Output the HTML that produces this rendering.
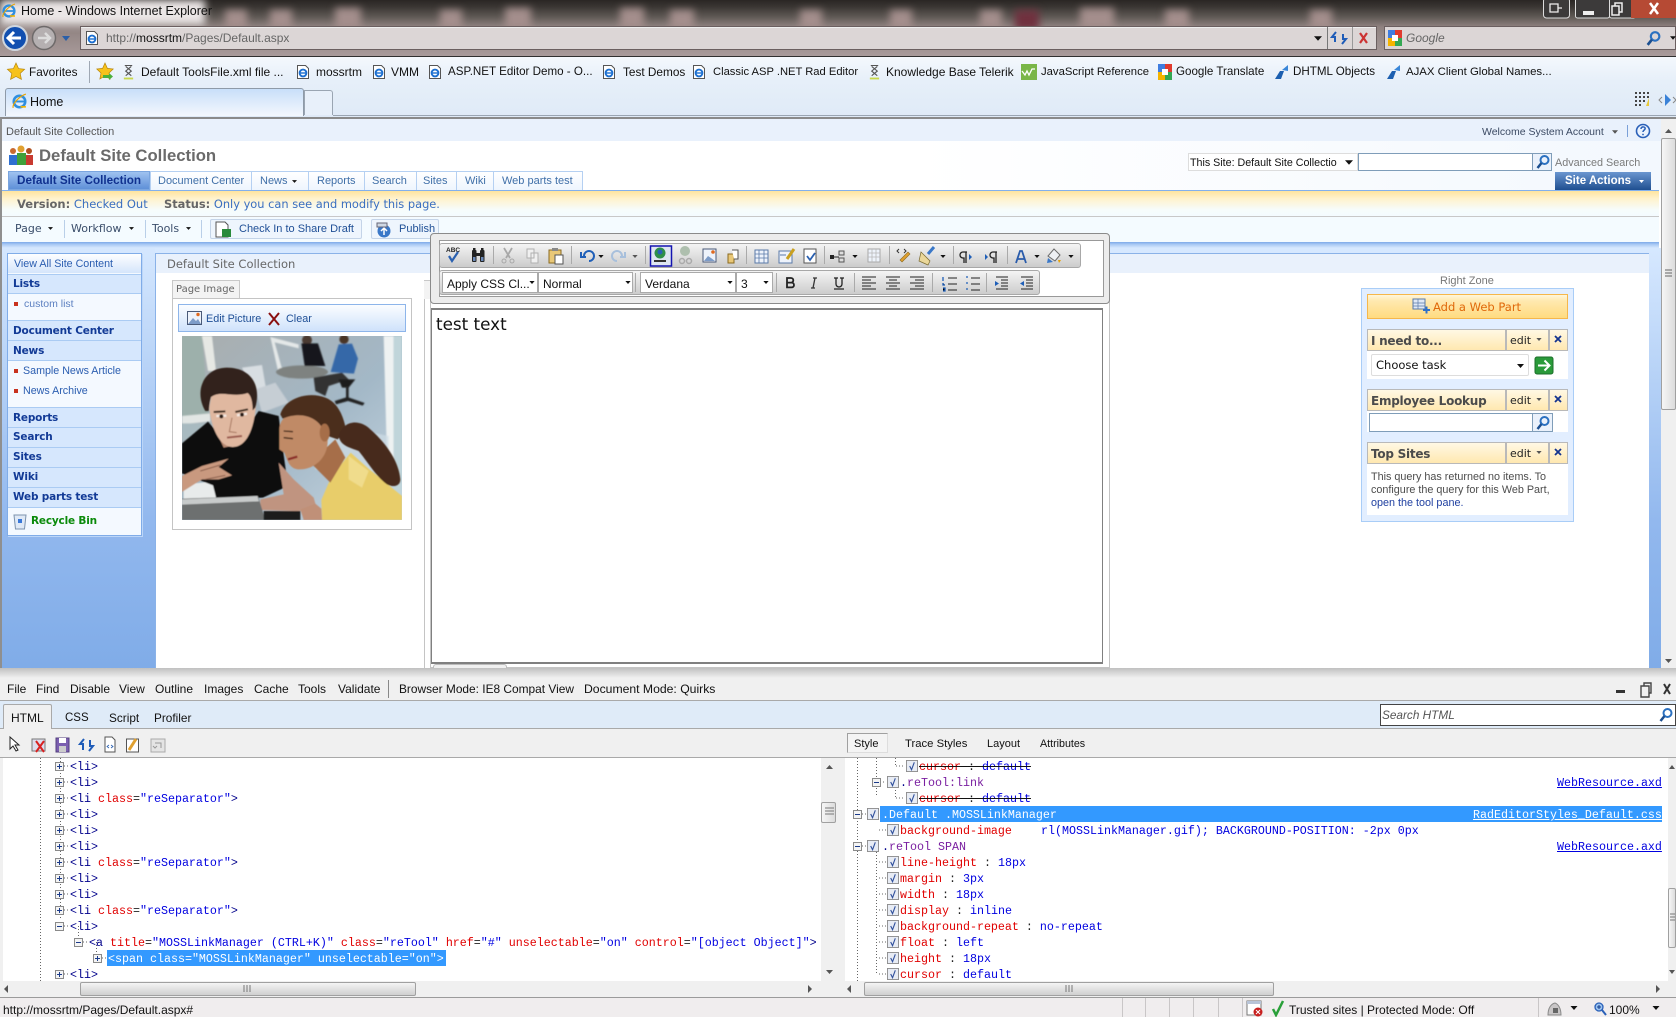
<!DOCTYPE html>
<html><head><meta charset="utf-8"><title>Home</title>
<style>
html,body{margin:0;padding:0;width:1676px;height:1017px;overflow:hidden;background:#f0f0f0}
body{position:relative;font:12px "Liberation Sans",sans-serif;color:#222}
.b{position:absolute;box-sizing:border-box}
.t{position:absolute;white-space:nowrap;line-height:16px;height:16px}
.v{font-family:"DejaVu Sans",sans-serif}
.m{font-family:"Liberation Mono",monospace;font-size:11.67px;color:#00008b;margin-top:1px}
.r{color:#e00000}.u{color:#0000e0}.k{color:#222}
.s{text-decoration:line-through;text-decoration-color:#111}
.n{font:bold 10.5px "DejaVu Sans",sans-serif;letter-spacing:-.18px;color:#123a96}
.l{font-size:10.7px;color:#2a5db0}
.a{font-size:11px;color:#3f6fa8}
.f{font-size:12px;color:#111}
.d{font-size:12px;color:#111}
.h{font:bold 12px "DejaVu Sans",sans-serif;letter-spacing:-.25px;color:#4b4b4b}
.lk{color:#0000e0;text-decoration:underline}
svg{position:absolute;left:0;top:0}
</style></head><body>

<svg width="0" height="0" style="position:absolute">
<defs>
<symbol id="ie" viewBox="0 0 16 16"><circle cx="8" cy="8" r="5.400" fill="none" stroke="#2f8fe0" stroke-width="2.400"/><path d="M3 8h10" stroke="#2f8fe0" stroke-width="1.800"/><path d="M9 13l5 0" stroke="#f4b400" stroke-width="1.600"/><path d="M2 14C1 10 8 3 14 1" fill="none" stroke="#e9a400" stroke-width="1.100"/></symbol>
<symbol id="pg" viewBox="0 0 16 16"><path d="M2.500 1.500h8l3 3v10h-11z" fill="#fff" stroke="#555"/><circle cx="8" cy="9" r="3.400" fill="none" stroke="#1c6fd0" stroke-width="1.900"/><path d="M5 9h6" stroke="#1c6fd0" stroke-width="1.400"/></symbol>
<symbol id="pl" viewBox="0 0 9 9"><rect x=".5" y=".5" width="8" height="8" fill="#f4f4f4" stroke="#8a8a8a"/><path d="M2 4.500h5M4.500 2v5" stroke="#1a3a8a"/></symbol>
<symbol id="mn" viewBox="0 0 9 9"><rect x=".5" y=".5" width="8" height="8" fill="#f4f4f4" stroke="#8a8a8a"/><path d="M2 4.500h5" stroke="#1a3a8a"/></symbol>
<symbol id="ck" viewBox="0 0 13 13"><rect x=".5" y=".5" width="12" height="12" fill="#e8ecf4" stroke="#8d8d8d"/><path d="M4 6.500l2 4L9 2.500" fill="none" stroke="#30509c" stroke-width="1.200"/></symbol>
<symbol id="g" viewBox="0 0 16 18"><rect x="1" y="1" width="7" height="8" fill="#3f7de0"/><rect x="8" y="1" width="7" height="8" fill="#e03a2e"/><rect x="1" y="9" width="7" height="8" fill="#f5b400"/><rect x="8" y="9" width="7" height="8" fill="#34a853"/><rect x="5" y="6" width="6" height="6" fill="#fff"/></symbol>
<symbol id="x" viewBox="0 0 14 18"><path d="M3 2h8M3 16h8M4 3l6 5-6 5M10 3l-6 5 6 5" fill="none" stroke="#555" stroke-width="1.200"/><rect x="2" y="15" width="10" height="2" fill="#c8d84a"/></symbol>
<symbol id="ms" viewBox="0 0 16 16"><path d="M1 15L6 7h4l-3 8z" fill="#1c5fb0"/><path d="M8 6l6-5v6z" fill="#3a86d8"/></symbol>
<symbol id="mg" viewBox="0 0 16 16"><circle cx="9.500" cy="6" r="4" fill="none" stroke="#2a70c0" stroke-width="2"/><path d="M6.500 9L2.500 14" stroke="#1c4f90" stroke-width="2.500"/></symbol>
<symbol id="dd" viewBox="0 0 7 4"><path d="M0 0h7L3.500 4z" fill="#111"/></symbol>
<symbol id="ddg" viewBox="0 0 7 4"><path d="M0 0h7L3.500 4z" fill="#555"/></symbol>
</defs>
</svg>

<!-- glass chrome -->
<div class="b" style="left:0;top:0;width:1676px;height:56px;background:linear-gradient(180deg,#2a2624 0,#3a3633 12%,#5f5955 30%,#8f8280 48%,#a89a9a 100%)"></div>
<svg width="1676" height="56" style="filter:blur(4px)">
<g fill="#a48e8c"><rect x="225" y="10" width="22" height="20"/><rect x="270" y="10" width="22" height="20"/><rect x="335" y="8" width="26" height="22"/><rect x="440" y="10" width="22" height="20"/><rect x="505" y="8" width="26" height="22"/><rect x="620" y="8" width="24" height="22"/><rect x="670" y="10" width="24" height="20"/><rect x="800" y="10" width="22" height="20"/><rect x="1080" y="8" width="34" height="22"/><rect x="1165" y="10" width="24" height="20"/><rect x="1310" y="10" width="22" height="20"/><rect x="890" y="10" width="22" height="20"/><rect x="980" y="10" width="22" height="20"/></g>
<rect x="1015" y="10" width="24" height="20" fill="#70303e"/>
<rect x="0" y="0" width="205" height="25" fill="#ebe6e6"/>
</svg>
<div class="t" style="left:21px;top:3px;font-size:12.500px;color:#111">Home - Windows Internet Explorer</div>
<svg width="40" height="60"><use href="#ie" x="1" y="3" width="16" height="16"/>
<circle cx="15" cy="38" r="12" fill="#114fb0" stroke="#cfd6de" stroke-width="2"/><path d="M21 38H10M14 32l-6 6 6 6" fill="none" stroke="#fff" stroke-width="3"/></svg>
<svg width="80" height="60"><circle cx="44" cy="38" r="11.500" fill="#b5b0b1" stroke="#6e6a6a" stroke-width="1.500"/><path d="M38 38h11M45 33l5 5-5 5" fill="none" stroke="#dcdcdc" stroke-width="2.500"/><path d="M62 36h8l-4 5z" fill="#2a5fa8"/></svg>
<!-- address -->
<div class="b" style="left:80px;top:26px;width:1297px;height:24px;background:#dcd6d6;border:1px solid #6b5f60;box-shadow:0 1px 0 #eee inset"></div>
<div class="b" style="left:1327px;top:27px;width:1px;height:22px;background:#777"></div>
<div class="b" style="left:1352px;top:27px;width:1px;height:22px;background:#999"></div>
<div class="t" style="left:106px;top:30px;color:#666;font-size:12px">http://<span style="color:#111">mossrtm</span>/Pages/Default.aspx</div>
<div class="b" style="left:1384px;top:26px;width:292px;height:24px;background:#dcd6d6;border:1px solid #6b5f60"></div>
<div class="t" style="left:1406px;top:30px;color:#666;font-size:12px;font-style:italic">Google</div>
<svg width="1676" height="60">
<use href="#pg" x="84" y="30" width="16" height="16"/>
<use href="#dd" x="1314" y="36" width="8" height="5"/>
<path d="M1336 32l-4 5h3v5M1342 44l4-5h-3v-5" fill="none" stroke="#1f5cb8" stroke-width="2"/>
<path d="M1360 33l7 10M1367 33l-7 10" stroke="#cc3333" stroke-width="2.200"/>
<use href="#g" x="1387" y="29" width="16" height="18"/>
<use href="#mg" x="1645" y="30" width="17" height="17"/>
<use href="#dd" x="1670" y="36" width="6" height="4"/>
<!-- window buttons -->
<g fill="#3c3a3a" stroke="#ddd"><rect x="1543.500" y="-2" width="26" height="20" rx="3"/><rect x="1575.500" y="-2" width="34" height="20" rx="2"/><rect x="1609.500" y="-2" width="26" height="20" rx="2"/></g>
<rect x="1631" y="-2" width="47" height="20" fill="#b64a34"/>
<path d="M1550 4h8v8h-8zM1558 8h4" fill="none" stroke="#eee" stroke-width="1.300"/>
<rect x="1583" y="11" width="11" height="4" fill="#eee"/>
<path d="M1612 6h7v9h-7zM1615 6V3h7v9h-3" fill="none" stroke="#eee" stroke-width="1.500"/>
<path d="M1650 3l8 11M1658 3l-8 11" stroke="#fff" stroke-width="2.500"/>
</svg>

<!-- favorites bar -->
<div class="b" style="left:0;top:56px;width:1676px;height:62px;background:linear-gradient(180deg,#f4f8fd 0,#e6eff9 40%,#dfeaf7 100%);border-top:1px solid #2f2f2f"></div>
<div class="b" style="left:89px;top:61px;width:1px;height:22px;background:#9fa8b4"></div>
<div class="t f" style="left:29px;top:64px;font-size:11.800px">Favorites</div>
<div class="t f" style="left:141px;top:64px">Default ToolsFile.xml file ...</div>
<div class="t f" style="left:316px;top:64px;font-size:12px">mossrtm</div>
<div class="t f" style="left:391px;top:64px">VMM</div>
<div class="t f" style="left:448px;top:64px;font-size:11.600px">ASP.NET Editor Demo - O...</div>
<div class="t f" style="left:623px;top:64px;font-size:11.800px">Test Demos</div>
<div class="t f" style="left:713px;top:64px;font-size:11.200px">Classic ASP .NET Rad Editor</div>
<div class="t f" style="left:886px;top:64px">Knowledge Base</div>
<div class="t f" style="left:979px;top:64px">Telerik</div>
<div class="t f" style="left:1041px;top:64px;font-size:11.300px">JavaScript Reference</div>
<div class="t f" style="left:1176px;top:64px;font-size:11.600px">Google Translate</div>
<div class="t f" style="left:1293px;top:64px;font-size:11.600px">DHTML Objects</div>
<div class="t f" style="left:1406px;top:64px;font-size:11.400px">AJAX Client Global Names...</div>
<svg width="1676" height="118">
<path d="M16 63l2.600 5.600 6 .7-4.400 4.100 1.200 6L16 76.500 10.600 79.400l1.200-6L7.400 69.300l6-.7z" fill="#f6c21c" stroke="#b8860b" stroke-width=".7"/>
<path d="M105 63l2.400 5.400 5.800.6-4.200 4 1.100 5.900L105 76l-5.100 2.900 1.100-5.900-4.200-4 5.800-.6z" fill="#f6c21c" stroke="#b8860b" stroke-width=".7"/><path d="M103 75h6v-2l4 3.500-4 3.500v-2h-6z" fill="#4bb03a"/>
<use href="#x" x="122" y="63" width="13" height="18"/>
<use href="#pg" x="295" y="64" width="16" height="16"/><use href="#pg" x="371" y="64" width="16" height="16"/><use href="#pg" x="427" y="64" width="16" height="16"/><use href="#pg" x="601" y="64" width="16" height="16"/><use href="#pg" x="691" y="64" width="16" height="16"/>
<use href="#x" x="868" y="63" width="13" height="18"/>
<rect x="1021" y="64" width="16" height="16" fill="#7ab648"/><path d="M1022 71l3 4 2-4 2 4 3-6h3" fill="none" stroke="#fff" stroke-width="1.300"/>
<use href="#g" x="1157" y="63" width="16" height="18"/>
<use href="#ms" x="1274" y="64" width="16" height="16"/><use href="#ms" x="1386" y="64" width="16" height="16"/>
</svg>
<!-- tabs -->
<div class="b" style="left:5px;top:88px;width:299px;height:28px;background:linear-gradient(180deg,#c8dffa 0,#dceafb 45%,#f3f7fd 100%);border:1px solid #8e9aa8;border-bottom:0;border-radius:3px 3px 0 0"></div>
<div class="b" style="left:304px;top:90px;width:29px;height:25px;background:#e8f0fa;border:1px solid #9aa5b2;border-bottom:0;border-radius:0 3px 0 0"></div>
<div class="b" style="left:333px;top:115px;width:1343px;height:1px;background:#9aa5b2"></div>
<div class="t" style="left:30px;top:94px;font-size:12.500px;color:#111">Home</div>
<svg width="1676" height="118"><use href="#ie" x="11" y="93" width="17" height="17"/>
<g fill="#444"><rect x="1635" y="92" width="2" height="2"/><rect x="1639" y="92" width="2" height="2"/><rect x="1643" y="92" width="2" height="2"/><rect x="1647" y="92" width="2" height="2"/><rect x="1635" y="96" width="2" height="2"/><rect x="1639" y="96" width="2" height="2"/><rect x="1643" y="96" width="2" height="2"/><rect x="1647" y="96" width="2" height="2"/><rect x="1635" y="100" width="2" height="2"/><rect x="1639" y="100" width="2" height="2"/><rect x="1643" y="100" width="2" height="2"/><rect x="1635" y="104" width="2" height="2"/><rect x="1639" y="104" width="2" height="2"/></g>
<path d="M1649 98l-3 8h3z" fill="#e8c93a"/>
<path d="M1665 94v12l6-6z" fill="#3a82d8"/><path d="M1662 97l-3 3 3 3M1673 97l3 3-3 3" fill="none" stroke="#888"/>
</svg>

<!-- page -->
<div class="b" style="left:0;top:117px;width:1676px;height:551px;background:#fff;border-top:2px solid #8a8a8a;border-left:2px solid #8f8f8f"></div>
<div class="b" style="left:2px;top:119px;width:1659px;height:22px;background:#e9f1fc"></div>
<div class="b" style="left:2px;top:141px;width:1659px;height:49px;background:linear-gradient(90deg,#fff 55%,#f3f8fe 100%)"></div>
<div class="t" style="left:6px;top:124px;font-size:11px;color:#555">Default Site Collection</div>
<div class="t" style="left:1482px;top:124px;font-size:10.500px;color:#3b4a63">Welcome System Account</div>
<div class="b" style="left:1627px;top:125px;width:1px;height:12px;background:#7aa0d8"></div>
<div class="t" style="left:39px;top:148px;font:bold 16.700px/16px 'Liberation Sans',sans-serif;color:#6a6a6a">Default Site Collection</div>
<!-- search -->
<div class="b" style="left:1188px;top:153px;width:170px;height:18px;background:#fff;border:1px solid #ddd"></div>
<div class="t" style="left:1190px;top:155px;font-size:10.700px;color:#111">This Site: Default Site Collectio</div>
<div class="b" style="left:1358px;top:153px;width:175px;height:18px;background:#fff;border:1px solid #7f9db9"></div>
<div class="b" style="left:1532px;top:153px;width:20px;height:18px;background:#eaf1fb;border:1px solid #7f9db9"></div>
<div class="t" style="left:1555px;top:155px;font-size:10.800px;color:#7a7a7a">Advanced Search</div>
<!-- top nav -->
<div class="b" style="left:150px;top:171px;width:433px;height:19px;background:linear-gradient(180deg,#fff,#eef5fe);border:1px solid #b5d0f2;border-bottom:0"></div>
<div class="b" style="left:8px;top:171px;width:142px;height:19px;background:linear-gradient(180deg,#9fc2f0,#5f90d8 100%);border:1px solid #7aa5df"></div>
<div class="b" style="left:251px;top:171px;width:1px;height:19px;background:#b5d0f2"></div>
<div class="b" style="left:308px;top:171px;width:1px;height:19px;background:#b5d0f2"></div>
<div class="b" style="left:364px;top:171px;width:1px;height:19px;background:#b5d0f2"></div>
<div class="b" style="left:416px;top:171px;width:1px;height:19px;background:#b5d0f2"></div>
<div class="b" style="left:456px;top:171px;width:1px;height:19px;background:#b5d0f2"></div>
<div class="b" style="left:493px;top:171px;width:1px;height:19px;background:#b5d0f2"></div>
<div class="t" style="left:17px;top:173px;font:bold 11.700px/16px 'Liberation Sans',sans-serif;color:#10318f">Default Site Collection</div>
<div class="t a" style="left:158px;top:173px">Document Center</div>
<div class="t a" style="left:260px;top:173px">News</div>
<div class="t a" style="left:317px;top:173px">Reports</div>
<div class="t a" style="left:372px;top:173px">Search</div>
<div class="t a" style="left:423px;top:173px">Sites</div>
<div class="t a" style="left:465px;top:173px">Wiki</div>
<div class="t a" style="left:502px;top:173px">Web parts test</div>
<div class="b" style="left:1555px;top:172px;width:96px;height:18px;background:linear-gradient(180deg,#6a96d0,#1f4f90)"></div>
<div class="t" style="left:1565px;top:173px;font:bold 11.500px/16px 'Liberation Sans',sans-serif;color:#fff">Site Actions</div>
<!-- yellow band -->
<div class="b" style="left:2px;top:190px;width:1657px;height:26px;background:linear-gradient(180deg,#ffe49e 0,#fff2cc 30%,#f6fcfb 75%,#f4fbff 100%);border-top:1px solid #83b0ec"></div>
<div class="t v" style="left:17px;top:196px;font-size:11.500px;color:#3a6fc0"><b style="color:#666">Version:</b> Checked Out</div>
<div class="t v" style="left:164px;top:196px;font-size:11.400px;color:#3a6fc0"><b style="color:#666">Status:</b> Only you can see and modify this page.</div>
<div class="b" style="left:2px;top:216px;width:1657px;height:26px;background:#f4fbff;border-top:1px solid #c8c8c8"></div>
<div class="t v" style="left:15px;top:221px;font-size:11px;color:#3b4e6b">Page</div>
<div class="t v" style="left:71px;top:221px;font-size:11px;color:#3b4e6b">Workflow</div>
<div class="t v" style="left:152px;top:221px;font-size:11px;color:#3b4e6b">Tools</div>
<div class="b" style="left:64px;top:220px;width:1px;height:18px;background:#b9cfe8"></div>
<div class="b" style="left:145px;top:220px;width:1px;height:18px;background:#b9cfe8"></div>
<div class="b" style="left:201px;top:220px;width:1px;height:18px;background:#b9cfe8"></div>
<div class="b" style="left:210px;top:219px;width:152px;height:20px;background:#eef5fd;border:1px solid #c4d4e8;border-radius:2px"></div>
<div class="b" style="left:371px;top:219px;width:68px;height:20px;background:#eef5fd;border:1px solid #c4d4e8;border-radius:2px"></div>
<div class="t" style="left:239px;top:221px;font-size:11px;color:#1f4f96">Check In to Share Draft</div>
<div class="t" style="left:399px;top:221px;font-size:11px;color:#1f4f96">Publish</div>
<!-- nav column -->
<div class="b" style="left:2px;top:242px;width:153px;height:426px;background:linear-gradient(180deg,#d6e8ff 0,#bcd6f8 25%,#92b8ee 65%,#80ace8 100%)"></div>
<div class="b" style="left:2px;top:242px;width:1657px;height:6px;background:linear-gradient(180deg,#7da9e8 0,#a9c9f4 40%,#d6e8ff 100%)"></div>
<div class="b" style="left:155px;top:248px;width:1494px;height:5px;background:#d6e8ff"></div>
<div class="b" style="left:1649px;top:248px;width:12px;height:420px;background:linear-gradient(180deg,#d6e8ff 0,#bcd6f8 25%,#92b8ee 65%,#80ace8 100%)"></div>
<div class="b" style="left:155px;top:253px;width:1494px;height:415px;background:#fff;border-top:1px solid #8ab2e8;border-left:1px solid #8ab2e8"></div>
<div class="b" style="left:156px;top:254px;width:1493px;height:19px;background:#e9f1fc"></div>
<div class="t v" style="left:167px;top:256px;font-size:11.500px;color:#666">Default Site Collection</div>

<div class="b" style="left:7px;top:253px;width:135px;height:283px;background:#f4f9ff;border:1px solid #80ace8;box-shadow:1px 1px 0 #bcd6f8"></div>
<div class="b" style="left:8px;top:254px;width:133px;height:19px;background:linear-gradient(180deg,#fdfeff,#d5e5fb)"></div>
<div class="b hd" style="left:8px;top:274px;width:133px;height:20px;background:#d6e7fd;border-top:1px solid #aacbf3;border-bottom:1px solid #aacbf3"></div>
<div class="b hd" style="left:8px;top:320px;width:133px;height:21px;background:#d6e7fd;border-top:1px solid #aacbf3;border-bottom:1px solid #aacbf3"></div>
<div class="b hd" style="left:8px;top:341px;width:133px;height:20px;background:#d6e7fd;border-bottom:1px solid #aacbf3"></div>
<div class="b hd" style="left:8px;top:407px;width:133px;height:21px;background:#d6e7fd;border-top:1px solid #aacbf3;border-bottom:1px solid #aacbf3"></div>
<div class="b hd" style="left:8px;top:428px;width:133px;height:20px;background:#d6e7fd;border-bottom:1px solid #aacbf3"></div>
<div class="b hd" style="left:8px;top:448px;width:133px;height:20px;background:#d6e7fd;border-bottom:1px solid #aacbf3"></div>
<div class="b hd" style="left:8px;top:468px;width:133px;height:20px;background:#d6e7fd;border-bottom:1px solid #aacbf3"></div>
<div class="b hd" style="left:8px;top:488px;width:133px;height:20px;background:#d6e7fd;border-bottom:1px solid #aacbf3"></div>
<div class="t" style="left:14px;top:256px;font-size:10.700px;color:#2a5db0">View All Site Content</div>
<div class="t n" style="left:13px;top:278px">Lists</div>
<div class="t l" style="left:24px;top:296px;font-size:10.500px;color:#5b7fc0">custom list</div>
<div class="t n" style="left:13px;top:325px">Document Center</div>
<div class="t n" style="left:13px;top:345px">News</div>
<div class="t l" style="left:23px;top:363px">Sample News Article</div>
<div class="t l" style="left:23px;top:383px">News Archive</div>
<div class="t n" style="left:13px;top:412px">Reports</div>
<div class="t n" style="left:13px;top:431px">Search</div>
<div class="t n" style="left:13px;top:451px">Sites</div>
<div class="t n" style="left:13px;top:471px">Wiki</div>
<div class="t n" style="left:13px;top:491px">Web parts test</div>
<div class="t n" style="left:31px;top:512px;margin-top:3px;color:#0a8a0a">Recycle Bin</div>
<div class="b" style="left:14px;top:302px;width:4px;height:4px;background:#c8321e"></div>
<div class="b" style="left:14px;top:369px;width:4px;height:4px;background:#c8321e"></div>
<div class="b" style="left:14px;top:389px;width:4px;height:4px;background:#c8321e"></div>

<!-- page image -->
<div class="b" style="left:172px;top:280px;width:68px;height:19px;background:#f3f3f3;border:1px solid #c8c8c8;border-bottom:0"></div>
<div class="t v" style="left:176px;top:282px;font-size:10px;color:#666">Page Image</div>
<div class="b" style="left:172px;top:298px;width:240px;height:232px;background:#fff;border:1px solid #c4c4c4"></div>
<div class="b" style="left:178px;top:304px;width:228px;height:28px;background:linear-gradient(180deg,#fbfdff,#cfe2fb);border:1px solid #8db5ea"></div>
<div class="t" style="left:206px;top:311px;font-size:10.800px;color:#1f4f96">Edit Picture</div>
<div class="t" style="left:286px;top:311px;font-size:10.800px;color:#1f4f96">Clear</div>
<div class="b" style="left:424px;top:280px;width:1px;height:388px;background:#c4c4c4"></div>
<div class="b" style="left:424px;top:280px;width:8px;height:19px;background:#f3f3f3;border-top:1px solid #c8c8c8"></div>

<svg viewBox="0 0 660 552" style="left:182px;top:336px;width:220px;height:184px">
<defs><filter id="bl" x="-5%" y="-5%" width="110%" height="110%"><feGaussianBlur stdDeviation="2.500"/></filter><filter id="bs" x="-5%" y="-5%" width="110%" height="110%"><feGaussianBlur stdDeviation="1.800"/></filter>
<linearGradient id="bgp" x1="0" y1="0" x2="1" y2="1"><stop offset="0" stop-color="#a9adad"/><stop offset=".55" stop-color="#a3b8c7"/><stop offset="1" stop-color="#c9d8e3"/></linearGradient></defs>
<rect width="660" height="552" fill="url(#bgp)"/>
<g filter="url(#bl)">
<path d="M0 0h60l20 240H0z" fill="#9db0ab"/>
<path d="M60 0h30l12 105H78z" fill="#e6e8e4"/>
<path d="M0 240l85-8v24L0 265z" fill="#e2e6e4"/>
<path d="M0 262h90l-60 50H0z" fill="#a8bac0"/>
<path d="M605 0h30v370h-20z" fill="#eef2f2"/>
<path d="M635 0h25v552h-25z" fill="#c0d5da"/>
<path d="M265 3l85 22 0 12-72-18 25 90h-14z" fill="#e4e8e8"/>
<path d="M180 95l60-8 12 70-40 10z" fill="#d8dee2"/>
<path d="M220 160l60-20 40 60-80 30z" fill="#c6ced4"/>
<ellipse cx="360" cy="108" rx="78" ry="20" fill="#7e8280"/>
<circle cx="375" cy="12" r="15" fill="#4c3a30"/><path d="M358 22h50l22 68h-62z" fill="#17181c"/>
<circle cx="486" cy="10" r="14" fill="#4a3428"/><path d="M470 25l40-2 18 45-12 45-70-5z" fill="#3468a8"/>
<path d="M395 125l85-15 20 20-60 20-10 30-30-15z" fill="#333"/>
<path d="M470 130h50l-20 25h-20z" fill="#1a1a1a"/><path d="M492 150h8v40h-8z" fill="#222"/><path d="M458 195l38-12 52 18-6 8-44-14-36 10z" fill="#222"/>
<path d="M380 250l240 50v110l-220-10z" fill="#cfdde6" opacity=".7"/>
</g>
<g filter="url(#bs)">
<path d="M5 445l90-8 12 55-102 5z" fill="#e8ebeb"/>
<path d="M0 322l78-65 60 70 62-60 30-42 60 15 12 95 16 115-75 35-140 3-10-40L0 412z" fill="#111"/>
<path d="M290 380l45 50 60 55 10 35-60 5-110-3v-32l70-15z" fill="#c09480"/>
<path d="M0 420l60-30 80-22-30 25 40 25-40 12-50 0-60 38-0 8z" fill="#c9997f"/>
<path d="M55 405l60-18M70 430l60-12" stroke="#8a5f4c" stroke-width="3"/>
<path d="M100 280l25 55 45-10 35-50-5-40z" fill="#b98a72"/>
<path d="M82 215c5 60 30 118 70 118 40 0 65-50 70-130l-10-45-120 0z" fill="#e0b8a0"/>
<path d="M70 225C35 165 65 95 135 95c65 0 105 45 85 120l-8 8c0-25-5-45-15-52-45 15-80-10-110 12-6 20-5 30-7 42z" fill="#33241b"/>
<path d="M103 240l30-1M165 238l30-5" stroke="#fff" stroke-width="7" opacity=".7"/>
<circle cx="118" cy="241" r="6" fill="#2a1a12"/><circle cx="180" cy="236" r="6" fill="#2a1a12"/>
<path d="M95 228l35-2M160 228l38-8" stroke="#3a291f" stroke-width="6"/>
<path d="M150 245l-8 42 22 3" fill="none" stroke="#a6765e" stroke-width="3"/><path d="M135 305l45-5" stroke="#9c5c50" stroke-width="6"/>
<path d="M0 488l228-8 22 72H0z" fill="#6d7070"/>
<path d="M0 490l226-10 5 16-231 10z" fill="#c8cbcb"/>
<path d="M245 525h110v27H245z" fill="#1b1b1b"/>
<path d="M420 552l-2-60 30-70 58-72 56 50 98 80v72z" fill="#e8cd6b"/>
<path d="M500 360l60 45-20 50-40-25z" fill="#f0dc8c"/>
<path d="M385 380l75-70 30 55-45 75z" fill="#a66e4a"/>
<path d="M292 280c2-35 30-55 75-50 45 0 70 40 70 85 0 50-40 88-90 85-25-3-30-25-40-50l-15-10z" fill="#c08a66"/>
<path d="M295 235c15-50 85-70 135-50 40 15 55 60 62 95l-25 30-35-12-10-20c-15-30-60-55-120-30z" fill="#4b2f1f"/>
<path d="M470 300c15-50 65-50 95-20 40 35 85 90 90 150 0 20-20 25-40 15-30-20-60-70-85-100-25-10-55-15-60-45z" fill="#47291a"/>
<ellipse cx="428" cy="290" rx="15" ry="27" fill="#a66e4a"/>
<path d="M305 285l28 2M305 305l28 3" stroke="#3f2516" stroke-width="4"/><path d="M318 370l28-8" stroke="#8c2e2a" stroke-width="7"/>
<path d="M355 520l45-17 18 15 2 34h-55z" fill="#c09078"/>
</g>
</svg>

<!-- right zone -->
<div class="t" style="left:1440px;top:273px;font-size:11px;color:#777">Right Zone</div>
<div class="b" style="left:1361px;top:288px;width:213px;height:234px;background:#e2eeff;border:1px solid #a9cdf7"></div>
<div class="b" style="left:1367px;top:294px;width:201px;height:25px;background:linear-gradient(180deg,#fff6dc 0,#ffe9b0 25%,#ffdb80 100%);border:1px solid #f6b74b"></div>
<div class="t v" style="left:1433px;top:299px;font-size:11.500px;color:#e0680a">Add a Web Part</div>
<div class="b" style="left:1367px;top:351px;width:201px;height:28px;background:#fff"></div>
<div class="b" style="left:1367px;top:411px;width:201px;height:21px;background:#fff"></div>
<div class="b" style="left:1367px;top:464px;width:201px;height:51px;background:#fff"></div>
<div class="b" style="left:1367px;top:329px;width:139px;height:22px;background:linear-gradient(180deg,#fff8e4,#ffe8b0);border:1px solid #b9b9b9"></div>
<div class="b" style="left:1506px;top:329px;width:43px;height:22px;background:linear-gradient(180deg,#fff8e4,#ffe8b0);border:1px solid #b9b9b9"></div>
<div class="b" style="left:1549px;top:329px;width:19px;height:22px;background:linear-gradient(180deg,#fff8e4,#ffe8b0);border:1px solid #b9b9b9"></div>
<div class="b" style="left:1367px;top:389px;width:139px;height:22px;background:linear-gradient(180deg,#fff8e4,#ffe8b0);border:1px solid #b9b9b9"></div>
<div class="b" style="left:1506px;top:389px;width:43px;height:22px;background:linear-gradient(180deg,#fff8e4,#ffe8b0);border:1px solid #b9b9b9"></div>
<div class="b" style="left:1549px;top:389px;width:19px;height:22px;background:linear-gradient(180deg,#fff8e4,#ffe8b0);border:1px solid #b9b9b9"></div>
<div class="b" style="left:1367px;top:442px;width:139px;height:22px;background:linear-gradient(180deg,#fff8e4,#ffe8b0);border:1px solid #b9b9b9"></div>
<div class="b" style="left:1506px;top:442px;width:43px;height:22px;background:linear-gradient(180deg,#fff8e4,#ffe8b0);border:1px solid #b9b9b9"></div>
<div class="b" style="left:1549px;top:442px;width:19px;height:22px;background:linear-gradient(180deg,#fff8e4,#ffe8b0);border:1px solid #b9b9b9"></div>
<div class="t h" style="left:1371px;top:334px">I need to...</div>
<div class="t h" style="left:1371px;top:394px">Employee Lookup</div>
<div class="t h" style="left:1371px;top:447px">Top Sites</div>
<div class="t v" style="left:1510px;top:333px;font-size:11px;color:#222">edit</div>
<div class="t v" style="left:1510px;top:393px;font-size:11px;color:#222">edit</div>
<div class="t v" style="left:1510px;top:446px;font-size:11px;color:#222">edit</div>
<div class="b" style="left:1371px;top:354px;width:158px;height:22px;background:#fff;border:1px solid #ddd;border-radius:2px"></div>
<div class="t v" style="left:1376px;top:357px;font-size:11.500px;color:#111">Choose task</div>
<div class="b" style="left:1369px;top:413px;width:164px;height:19px;background:#fff;border:1px solid #7f9db9"></div>
<div class="b" style="left:1532px;top:413px;width:21px;height:19px;background:#eaf1fb;border:1px solid #7f9db9"></div>
<div class="t" style="left:1371px;top:469px;font-size:10.800px;color:#4c4c4c">This query has returned no items. To</div>
<div class="t" style="left:1371px;top:482px;font-size:10.800px;color:#4c4c4c">configure the query for this Web Part,</div>
<div class="t" style="left:1371px;top:495px;font-size:10.800px;color:#1f3fa0">open the tool pane.</div>

<!-- scrollbar page -->
<div class="b" style="left:1661px;top:119px;width:15px;height:549px;background:#f0f0f0"></div>
<div class="b" style="left:1661px;top:138px;width:15px;height:272px;background:linear-gradient(90deg,#f6f6f6,#dcdcdc);border:1px solid #a0a0a0;border-radius:2px"></div>

<!-- editor -->
<div class="b" style="left:430px;top:300px;width:680px;height:368px;background:#fff;border:1px solid #c4c4c4"></div>
<div class="b" style="left:431px;top:308px;width:672px;height:356px;background:#fff;border:1px solid #808080;border-width:2px 1px 2px 1px"></div>
<div class="b" style="left:433px;top:664px;width:74px;height:4px;background:#f0f0f0;border:1px solid #bbb;border-bottom:0;border-radius:3px 3px 0 0"></div>
<div class="t v" style="left:436px;top:316px;font-size:16.800px;color:#111">test text</div>
<div class="b" style="left:430px;top:233px;width:680px;height:71px;background:#ececec;border:1px solid #8b8b8b;border-radius:4px"></div>
<div class="b" style="left:439px;top:240px;width:665px;height:57px;background:#fff;border:1px solid #999"></div>
<div class="b" style="left:439px;top:243px;width:642px;height:25px;background:linear-gradient(180deg,#f4f4f4,#cccccc);border:1px solid #a8a8a8;border-radius:3px"></div>
<div class="b" style="left:439px;top:270px;width:601px;height:25px;background:linear-gradient(180deg,#f4f4f4,#cccccc);border:1px solid #a8a8a8;border-radius:3px"></div>
<div class="b" style="left:442px;top:272px;width:96px;height:21px;background:#fff;border:1px solid #aaa"></div>
<div class="b" style="left:538px;top:272px;width:95px;height:21px;background:#fff;border:1px solid #aaa"></div>
<div class="b" style="left:640px;top:272px;width:96px;height:21px;background:#fff;border:1px solid #aaa"></div>
<div class="b" style="left:736px;top:272px;width:37px;height:21px;background:#fff;border:1px solid #aaa"></div>
<div class="t" style="left:447px;top:276px;font-size:12px;color:#111">Apply CSS Cl...</div>
<div class="t" style="left:543px;top:276px;font-size:12px;color:#111">Normal</div>
<div class="t" style="left:645px;top:276px;font-size:12px;color:#111">Verdana</div>
<div class="t" style="left:741px;top:276px;font-size:12px;color:#111">3</div>

<!-- main icon layer -->
<svg width="1676" height="680">
<!-- page title people -->
<g><circle cx="13" cy="151" r="3" fill="#c86a30"/><path d="M9 155h8v10H9z" fill="#2f6fd0"/><circle cx="21" cy="149" r="3.500" fill="#e0a030"/><path d="M17 153h9v12h-9z" fill="#3fa03a"/><circle cx="29" cy="151" r="3" fill="#b05020"/><path d="M26 155h7v10h-7z" fill="#c83a30"/></g>
<use href="#ddg" x="1612" y="130" width="6" height="4"/>
<circle cx="1643" cy="131" r="6.500" fill="#eaf2fd" stroke="#2a60b8" stroke-width="1.600"/><path d="M1641 129c0-3 5-2.500 4 0-.7 1.500-2 1.500-2 3" fill="none" stroke="#2a60b8" stroke-width="1.500"/><circle cx="1643" cy="134.500" r=".9" fill="#2a60b8"/>
<use href="#dd" x="1345" y="160" width="8" height="5"/>
<use href="#mg" x="1535" y="154" width="16" height="16"/>
<g fill="#fff"><path d="M1639 180h5l-2.500 3z"/></g>
<use href="#dd" x="292" y="180" width="5" height="3"/>
<use href="#dd" x="48" y="227" width="5" height="3"/><use href="#dd" x="129" y="227" width="5" height="3"/><use href="#dd" x="186" y="227" width="5" height="3"/>
<path d="M216 222h9l3 3v12h-12z" fill="#fff" stroke="#555"/><rect x="222" y="229" width="9" height="8" fill="#2a8a3a"/>
<circle cx="384" cy="231" r="6.500" fill="#3a78c8"/><path d="M384 235v-6M381 231l3-3 3 3" fill="none" stroke="#fff" stroke-width="1.500"/><rect x="377" y="223" width="10" height="4" fill="#cfd8e4" stroke="#667"/>
<!-- recycle -->
<path d="M14 515h12l-1.500 14h-9z" fill="#dfe9f6" stroke="#7d93ad"/><rect x="18" y="519" width="4" height="4" fill="#3a78d8"/>
<!-- edit picture -->
<rect x="187.500" y="311.500" width="14" height="13" fill="#eef3fb" stroke="#4a5a78"/><path d="M188 324l5-6 3 3 2-2 3 5z" fill="#7d9cc8"/><circle cx="198" cy="314.500" r="1.700" fill="#e06a20"/>
<path d="M269 313l10 12M279 313l-10 12" stroke="#8a0f0f" stroke-width="2"/>
<!-- webpart icons -->
<rect x="1413" y="299" width="12" height="10" fill="#dfe8f6" stroke="#5a7aa8"/><path d="M1413 303h12M1413 306h12M1418 299v10" stroke="#5a7aa8" stroke-width=".7"/><path d="M1423 309h2.500v-2.500h2v2.500h2.500v2h-2.500v2.500h-2v-2.500h-2.500z" fill="#2f70c8"/>
<use href="#ddg" x="1536" y="338" width="6" height="3"/><use href="#ddg" x="1536" y="398" width="6" height="3"/><use href="#ddg" x="1536" y="451" width="6" height="3"/>
<g stroke="#14348f" stroke-width="1.800"><path d="M1555 336l6 6M1561 336l-6 6M1555 396l6 6M1561 396l-6 6M1555 449l6 6M1561 449l-6 6"/></g>
<use href="#dd" x="1517" y="364" width="7" height="4"/>
<rect x="1535" y="357" width="18" height="17" rx="2" fill="#2a9a3a" stroke="#1c6f2a"/><path d="M1538 365.500h11M1544.500 360.500l5 5-5 5" fill="none" stroke="#fff" stroke-width="2"/>
<use href="#mg" x="1535" y="415" width="16" height="16"/>
<!-- page scrollbar -->
<path d="M1665 133l3.500-4 3.500 4z" fill="#555"/><path d="M1665 659l3.500 4 3.500-4z" fill="#555"/>
<path d="M1665 270h7M1665 273h7M1665 276h7" stroke="#666"/>
<!-- editor row separators -->
<g stroke="#aaa"><path d="M493.500 246v18M571.500 246v18M645.500 246v18M746.500 246v18M824.500 246v18M889.500 246v18M953.500 246v18M1007.500 246v18M635.500 273v19M776.500 273v19M854.500 273v19M932.500 273v19M986.500 273v19"/></g>
<rect x="650.500" y="246" width="21" height="20" fill="#dfe6f2" stroke="#1414b0" stroke-width="1.500"/>
<!-- row 1 icons -->
<g>
<text x="446" y="252" font-family="Liberation Sans,sans-serif" font-size="6.500" font-weight="bold" fill="#222">ABC</text>
<path d="M449 256l3 5 6-9" fill="none" stroke="#2a60b0" stroke-width="2.200"/>
<g fill="#222"><rect x="472" y="250" width="4.500" height="12" rx="1"/><rect x="480" y="250" width="4.500" height="12" rx="1"/><rect x="476" y="253" width="4" height="3"/><rect x="473" y="248" width="2.500" height="3"/><rect x="481" y="248" width="2.500" height="3"/></g><g fill="#6a89b8"><rect x="473" y="257" width="2.500" height="4"/><rect x="481" y="257" width="2.500" height="4"/></g>
<path d="M504 248l6 10M512 248l-6 10" stroke="#a8a8a8" stroke-width="1.800"/><circle cx="504" cy="261" r="2" fill="none" stroke="#a8a8a8"/><circle cx="512" cy="261" r="2" fill="none" stroke="#a8a8a8"/>
<path d="M527 249h7v9h-7zM531 253h7v10h-7z" fill="#f0f0f0" stroke="#b0b0b0"/>
<rect x="549" y="250" width="12" height="13" fill="#e9c878" stroke="#8a6a20"/><rect x="552" y="248" width="6" height="3" fill="#888"/><rect x="555" y="255" width="8" height="9" fill="#fff" stroke="#555"/>
<path d="M584 256a5 5 0 1 1 5 5M581 252v5h5" fill="none" stroke="#1f5fb8" stroke-width="2"/>
<use href="#dd" x="598" y="255" width="6" height="3"/>
<path d="M622 256a5 5 0 1 0-5 5M625 252v5h-5" fill="none" stroke="#a8c0dc" stroke-width="2"/>
<use href="#ddg" x="632" y="255" width="6" height="3"/>
<circle cx="660" cy="253" r="5.500" fill="#2f8f4a"/><circle cx="660" cy="252" r="2.500" fill="#2a60b8"/><path d="M654 261h12" stroke="#333" stroke-width="2"/>
<circle cx="685" cy="251" r="5" fill="#aebfae"/><circle cx="682" cy="261" r="2.500" fill="none" stroke="#aaa" stroke-width="1.500"/><circle cx="689" cy="261" r="2.500" fill="none" stroke="#aaa" stroke-width="1.500"/>
<rect x="703" y="249" width="13" height="13" fill="#eef3fb" stroke="#4a5a78"/><path d="M704 261l4-5 3 2 4 3z" fill="#7d9cc8"/><circle cx="713" cy="252" r="1.800" fill="#e06a20"/>
<path d="M728 254h6v9h-6z" fill="#e9c878" stroke="#8a6a20"/><path d="M732 250h6v9h-4" fill="#fff" stroke="#555"/>
<rect x="755" y="250" width="13" height="13" fill="#eef3fb" stroke="#5a7aa8"/><path d="M755 254h13M755 258h13M759 250v13M764 250v13" stroke="#5a7aa8" stroke-width=".8"/>
<rect x="779" y="251" width="13" height="12" fill="#eef3fb" stroke="#5a7aa8"/><path d="M780 255h6" stroke="#5a7aa8"/><path d="M787 259l7-10" stroke="#c9a020" stroke-width="3"/>
<rect x="804" y="249" width="12" height="14" fill="#fff" stroke="#555"/><path d="M807 256l3 4 5-7" fill="none" stroke="#2a60b0" stroke-width="1.800"/>
<path d="M832 257h7" stroke="#222"/><rect x="830" y="255" width="4" height="4" fill="#222"/><path d="M839 251h5v4h-5zM839 258h5v4h-5z" fill="#ddd" stroke="#555"/>
<use href="#dd" x="852" y="255" width="6" height="3"/>
<rect x="868" y="249" width="12" height="13" fill="#eef3fb" stroke="#a8a8a8"/><path d="M868 253h12M868 257h12M872 249v13M876 249v13" stroke="#b8b8b8" stroke-width=".8"/>
<path d="M899 249l-2 2 2 2M904 249l2 2-2 2" stroke="#333" fill="none"/><path d="M902 262l8-8-2-2-8 8z" fill="#e0a030" stroke="#8a6a20" stroke-width=".6"/>
<path d="M921 252l9 9-2 4-9-4z" fill="#ead79a" stroke="#7a6a30" stroke-width=".7"/><path d="M928 254l6-7" stroke="#3a78c8" stroke-width="3"/>
<use href="#dd" x="940" y="255" width="6" height="3"/>
<path d="M967 252h-4a3 3 0 0 0 0 6h1v5M966 252v11" fill="none" stroke="#222" stroke-width="1.300"/><path d="M969 254v6l3-3z" fill="#1f5fb8"/>
<path d="M997 252h-4a3 3 0 0 0 0 6h1v5M996 252v11" fill="none" stroke="#222" stroke-width="1.300"/><path d="M985 254v6l3-3z" fill="#1f5fb8"/>
<path d="M1016 263l4-12h2l4 12M1017.500 259h7" fill="none" stroke="#2a5cab" stroke-width="1.800"/>
<use href="#dd" x="1034" y="255" width="6" height="3"/>
<path d="M1048 256l6-7 6 6-5 6z" fill="#eef0f4" stroke="#6a6a6a"/><path d="M1048 258l-1 5 6-1z" fill="#3a78c8"/><path d="M1058 260l1 3 2-3" fill="#e8a000"/>
<use href="#dd" x="1068" y="255" width="6" height="3"/>
</g>
<!-- selects arrows -->
<use href="#dd" x="529" y="281" width="6" height="3"/><use href="#dd" x="625" y="281" width="6" height="3"/><use href="#dd" x="727" y="281" width="6" height="3"/><use href="#dd" x="763" y="281" width="6" height="3"/>
<!-- row 2 icons -->
<path d="M787 278h4a2.300 2.300 0 0 1 0 4.600h-4zM787 282.600h4.600a2.400 2.400 0 0 1 0 4.800H787z" fill="none" stroke="#222" stroke-width="1.800"/>
<path d="M813 278h4M811 288h4M815 278l-2 10" stroke="#333" stroke-width="1.300"/>
<path d="M836 278v6a3 3 0 0 0 6 0v-6M834 278h4M840 278h4M834 289h10" fill="none" stroke="#222" stroke-width="1.300"/>
<g stroke="#222" stroke-width="1.100"><path d="M862 277h14M862 280h9M862 283h14M862 286h9M862 289h14"/><path d="M886 277h14M889 280h8M886 283h14M889 286h8M886 289h14"/><path d="M910 277h14M915 280h9M910 283h14M915 286h9M910 289h14"/><path d="M948 278h9M948 284h9M948 290h9"/><path d="M971 278h9M971 284h9M971 290h9"/></g>
<g stroke="#1f5fb8" stroke-width="1.300"><path d="M943 277v4M943 283v2h2M943 288h2v3h-2"/><path d="M966 277h2M966 283h2M966 289h2"/></g>
<g stroke="#222" stroke-width="1.100"><path d="M996 277h12M1001 280h7M1001 283h7M1001 286h7M996 289h12M1021 277h12M1026 280h7M1026 283h7M1026 286h7M1021 289h12"/></g>
<path d="M995 281l4 2.500-4 2.500z" fill="#1f5fb8"/><path d="M1024 281l-4 2.500 4 2.500z" fill="#1f5fb8"/>
</svg>

<!-- devtools -->
<div class="b" style="left:0;top:668px;width:1676px;height:349px;background:#f0f0f0"></div>
<div class="b" style="left:0;top:668px;width:1676px;height:10px;background:linear-gradient(180deg,#c0c0c0,#f0f0f0)"></div>
<div class="b" style="left:0;top:700px;width:1676px;height:1px;background:#a9a9a9"></div>
<div class="b" style="left:0;top:701px;width:1676px;height:28px;background:#dfebf8;border-bottom:1px solid #a9a9a9"></div>
<div class="b" style="left:3px;top:704px;width:49px;height:25px;background:#f0f0f0;border:1px solid #a9a9a9;border-bottom:0;border-radius:2px 2px 0 0"></div>
<div class="b" style="left:1380px;top:704px;width:296px;height:22px;background:#fff;border:1px solid #444"></div>
<div class="b" style="left:0;top:757px;width:1676px;height:1px;background:#a9a9a9"></div>
<div class="b" style="left:3px;top:758px;width:818px;height:223px;background:#fff"></div>
<div class="b" style="left:845px;top:758px;width:823px;height:223px;background:#fff"></div>
<div class="b" style="left:821px;top:758px;width:15px;height:223px;background:#f0f0f0"></div>
<div class="b" style="left:821px;top:802px;width:15px;height:21px;background:linear-gradient(90deg,#f6f6f6,#dcdcdc);border:1px solid #a0a0a0;border-radius:2px"></div>
<div class="b" style="left:1668px;top:888px;width:8px;height:60px;background:linear-gradient(90deg,#f6f6f6,#dcdcdc);border:1px solid #a0a0a0;border-radius:2px"></div>
<div class="b" style="left:80px;top:982px;width:336px;height:14px;background:linear-gradient(180deg,#f4f4f4,#cfcfcf);border:1px solid #a0a0a0;border-radius:2px"></div>
<div class="b" style="left:864px;top:982px;width:410px;height:14px;background:linear-gradient(180deg,#f4f4f4,#cfcfcf);border:1px solid #a0a0a0;border-radius:2px"></div>
<div class="b" style="left:0;top:997px;width:1676px;height:20px;background:#f0edee;border-top:1px solid #9b9b9b"></div>
<div class="b" style="left:847px;top:733px;width:41px;height:20px;background:#f4f4f4;border:1px solid #a0a0a0;border-bottom-color:#ddd;border-right-color:#ddd"></div>
<div class="b" style="left:107px;top:950px;width:339px;height:16px;background:#3399ff"></div>
<div class="b" style="left:880px;top:806px;width:782px;height:16px;background:#3399ff"></div>
<div class="b" style="left:388px;top:680px;width:1px;height:18px;background:#888"></div>

<div class="t d" style="left:7px;top:681px">File</div>
<div class="t d" style="left:36px;top:681px">Find</div>
<div class="t d" style="left:70px;top:681px">Disable</div>
<div class="t d" style="left:119px;top:681px">View</div>
<div class="t d" style="left:155px;top:681px">Outline</div>
<div class="t d" style="left:204px;top:681px">Images</div>
<div class="t d" style="left:254px;top:681px">Cache</div>
<div class="t d" style="left:298px;top:681px">Tools</div>
<div class="t d" style="left:338px;top:681px">Validate</div>
<div class="t d" style="left:399px;top:681px;font-size:11.900px">Browser Mode: IE8 Compat View</div>
<div class="t d" style="left:584px;top:681px;font-size:12.200px">Document Mode: Quirks</div>
<div class="t d" style="left:11px;top:710px">HTML</div>
<div class="t d" style="left:65px;top:710px;font-size:11.500px">CSS</div>
<div class="t d" style="left:109px;top:710px;font-size:11.800px">Script</div>
<div class="t d" style="left:154px;top:710px;font-size:11.800px">Profiler</div>
<div class="t" style="left:1382px;top:707px;font-size:11.800px;font-style:italic;color:#555">Search HTML</div>
<div class="t d" style="left:854px;top:736px;font-size:11px">Style</div>
<div class="t d" style="left:905px;top:736px;font-size:11.300px">Trace Styles</div>
<div class="t d" style="left:987px;top:736px;font-size:11px">Layout</div>
<div class="t d" style="left:1040px;top:736px;font-size:10.700px">Attributes</div>

<!-- html tree -->
<div class="t m" style="left:70px;top:758px">&lt;li&gt;</div>
<div class="t m" style="left:70px;top:774px">&lt;li&gt;</div>
<div class="t m" style="left:70px;top:790px">&lt;li <span class="r">class</span><span class="k">=</span><span class="u">"reSeparator"</span>&gt;</div>
<div class="t m" style="left:70px;top:806px">&lt;li&gt;</div>
<div class="t m" style="left:70px;top:822px">&lt;li&gt;</div>
<div class="t m" style="left:70px;top:838px">&lt;li&gt;</div>
<div class="t m" style="left:70px;top:854px">&lt;li <span class="r">class</span><span class="k">=</span><span class="u">"reSeparator"</span>&gt;</div>
<div class="t m" style="left:70px;top:870px">&lt;li&gt;</div>
<div class="t m" style="left:70px;top:886px">&lt;li&gt;</div>
<div class="t m" style="left:70px;top:902px">&lt;li <span class="r">class</span><span class="k">=</span><span class="u">"reSeparator"</span>&gt;</div>
<div class="t m" style="left:70px;top:918px">&lt;li&gt;</div>
<div class="t m" style="left:89px;top:934px">&lt;a <span class="r">title</span><span class="k">=</span><span class="u">"MOSSLinkManager (CTRL+K)"</span> <span class="r">class</span><span class="k">=</span><span class="u">"reTool"</span> <span class="r">href</span><span class="k">=</span><span class="u">"#"</span> <span class="r">unselectable</span><span class="k">=</span><span class="u">"on"</span> <span class="r">control</span><span class="k">=</span><span class="u">"[object Object]"</span>&gt;</div>
<div class="t m" style="left:108px;top:950px;color:#fff">&lt;span class="MOSSLinkManager" unselectable="on"&gt;</div>
<div class="t m" style="left:70px;top:966px">&lt;li&gt;</div>

<!-- styles tree -->
<div class="t m s" style="left:919px;top:758px"><span class="r">cursor</span> <span class="k">:</span> <span class="u">default</span></div>
<div class="t m" style="left:900px;top:774px">.<span style="color:#7a1fa0">reTool:link</span></div>
<div class="t m s" style="left:919px;top:790px"><span class="r">cursor</span> <span class="k">:</span> <span class="u">default</span></div>
<div class="t m" style="left:882px;top:806px;color:#fff">.Default .MOSSLinkManager</div>
<div class="t m" style="left:900px;top:822px"><span class="r">background-image</span></div>
<div class="t m" style="left:1041px;top:822px;color:#0000e0">rl(MOSSLinkManager.gif); BACKGROUND-POSITION: -2px 0px</div>
<div class="t m" style="left:882px;top:838px">.<span style="color:#7a1fa0">reTool SPAN</span></div>
<div class="t m" style="left:900px;top:854px"><span class="r">line-height</span> <span class="k">:</span> <span class="u">18px</span></div>
<div class="t m" style="left:900px;top:870px"><span class="r">margin</span> <span class="k">:</span> <span class="u">3px</span></div>
<div class="t m" style="left:900px;top:886px"><span class="r">width</span> <span class="k">:</span> <span class="u">18px</span></div>
<div class="t m" style="left:900px;top:902px"><span class="r">display</span> <span class="k">:</span> <span class="u">inline</span></div>
<div class="t m" style="left:900px;top:918px"><span class="r">background-repeat</span> <span class="k">:</span> <span class="u">no-repeat</span></div>
<div class="t m" style="left:900px;top:934px"><span class="r">float</span> <span class="k">:</span> <span class="u">left</span></div>
<div class="t m" style="left:900px;top:950px"><span class="r">height</span> <span class="k">:</span> <span class="u">18px</span></div>
<div class="t m" style="left:900px;top:966px"><span class="r">cursor</span> <span class="k">:</span> <span class="u">default</span></div>
<div class="t m lk" style="left:1557px;top:774px">WebResource.axd</div>
<div class="t m" style="left:1473px;top:806px;color:#fff;text-decoration:underline">RadEditorStyles_Default.css</div>
<div class="t m lk" style="left:1557px;top:838px">WebResource.axd</div>

<!-- status -->
<div class="t" style="left:3px;top:1002px;font-size:12px;color:#111">http://mossrtm/Pages/Default.aspx#</div>
<div class="t" style="left:1289px;top:1002px;font-size:12px;color:#111">Trusted sites | Protected Mode: Off</div>
<div class="t" style="left:1609px;top:1002px;font-size:12px;color:#111">100%</div>

<svg width="1676" height="1017">
<g fill="#333"><rect x="1616" y="690" width="9" height="3"/></g>
<path d="M1641 686h8v11h-8zM1644 686v-3h7v10h-2" fill="none" stroke="#444" stroke-width="1.400"/>
<path d="M1664 684l6 10M1670 684l-6 10" stroke="#333" stroke-width="2"/>
<use href="#mg" x="1658" y="707" width="16" height="16"/>
<!-- toolbar icons -->
<path d="M10 737l0 12 3-3 3 5 2-1-3-5 4 0z" fill="#fff" stroke="#222"/>
<rect x="32" y="739" width="13" height="12" fill="#dde" stroke="#777"/><path d="M36 741l8 11M44 741l-8 11" stroke="#d82020" stroke-width="2"/>
<rect x="56" y="738" width="13" height="14" fill="#7b5fb0" stroke="#55407f"/><rect x="59" y="738" width="7" height="5" fill="#fff"/><rect x="59" y="746" width="7" height="6" fill="#ccc"/>
<path d="M84 739l-4 5h3v6M89 751l4-5h-3v-6" fill="none" stroke="#1f5cb8" stroke-width="2"/>
<path d="M105 737h7l3 3v12h-10z" fill="#fff" stroke="#555"/><path d="M109 745l-2 1.500 2 1.500M111 745l2 1.500-2 1.500" stroke="#2a60b0" fill="none" stroke-width=".8"/>
<rect x="126.500" y="739" width="12" height="13" fill="#fff" stroke="#555"/><path d="M129 750l7-11" stroke="#e0a030" stroke-width="3"/>
<rect x="151" y="739" width="14" height="13" fill="#e4e4e4" stroke="#aaa"/><path d="M155 743h6v5M153 746l2 2 2-2" fill="none" stroke="#999"/>
<!-- left tree -->
<path d="M40.500 758v223M60.500 758v160M78.500 926v20" stroke="#666" stroke-dasharray="1 2"/>
<path d="M96.500 942v12" stroke="#666" stroke-dasharray="1 2"/>
<g stroke="#666" stroke-dasharray="1 2"><path d="M64 766h6M64 782h6M64 798h6M64 814h6M64 830h6M64 846h6M64 862h6M64 878h6M64 894h6M64 910h6M64 926h6M64 974h6M83 942h5M102 958h5"/></g>
<use href="#pl" x="55" y="762" width="9" height="9"/><use href="#pl" x="55" y="778" width="9" height="9"/><use href="#pl" x="55" y="794" width="9" height="9"/><use href="#pl" x="55" y="810" width="9" height="9"/><use href="#pl" x="55" y="826" width="9" height="9"/><use href="#pl" x="55" y="842" width="9" height="9"/><use href="#pl" x="55" y="858" width="9" height="9"/><use href="#pl" x="55" y="874" width="9" height="9"/><use href="#pl" x="55" y="890" width="9" height="9"/><use href="#pl" x="55" y="906" width="9" height="9"/><use href="#mn" x="55" y="922" width="9" height="9"/><use href="#mn" x="74" y="938" width="9" height="9"/><use href="#pl" x="93" y="954" width="9" height="9"/><use href="#pl" x="55" y="970" width="9" height="9"/>
<!-- scrollbar arrows -->
<g fill="#555"><path d="M826 769l3.500-4 3.500 4zM826 970l3.500 4 3.500-4zM1669 769l3-4 3 4zM1669 970l3 4 3-4z"/><path d="M8 985v8l-4-4zM808 985v8l4-4zM851 985v8l-4-4zM1656 985v8l4-4z"/></g>
<g stroke="#777"><path d="M825 808h9M825 811h9M825 814h9M1670 914h5M1670 917h5M1670 920h5M244 985v7M247 985v7M250 985v7M1066 985v7M1069 985v7M1072 985v7"/></g>
<!-- right tree -->
<path d="M857.500 758v223M876.500 758v38M895.500 758v8M895.500 790v8" stroke="#666" stroke-dasharray="1 2"/>
<path d="M876.500 852v122" stroke="#666" stroke-dasharray="1 2"/>
<g stroke="#666" stroke-dasharray="1 2"><path d="M896 766h9M896 798h9M862 814h4M879 830h7M862 846h4M879 862h7M879 878h7M879 894h7M879 910h7M879 926h7M879 942h7M879 958h7M879 974h7M880 782h6"/></g>
<use href="#mn" x="872" y="778" width="9" height="9"/><use href="#mn" x="853" y="810" width="9" height="9"/><use href="#mn" x="853" y="842" width="9" height="9"/>
<use href="#ck" x="906" y="760" width="12" height="12"/><use href="#ck" x="887" y="776" width="12" height="12"/><use href="#ck" x="906" y="792" width="12" height="12"/><use href="#ck" x="867" y="808" width="12" height="12"/><use href="#ck" x="887" y="824" width="12" height="12"/><use href="#ck" x="867" y="840" width="12" height="12"/><use href="#ck" x="887" y="856" width="12" height="12"/><use href="#ck" x="887" y="872" width="12" height="12"/><use href="#ck" x="887" y="888" width="12" height="12"/><use href="#ck" x="887" y="904" width="12" height="12"/><use href="#ck" x="887" y="920" width="12" height="12"/><use href="#ck" x="887" y="936" width="12" height="12"/><use href="#ck" x="887" y="952" width="12" height="12"/><use href="#ck" x="887" y="968" width="12" height="12"/>
<!-- status -->
<g stroke="#c9c6c7"><path d="M1122.500 998v19M1145.500 998v19M1169.500 998v19M1193.500 998v19M1218.500 998v19M1242.500 998v19M1538.500 998v19"/></g>
<rect x="1247" y="1001" width="14" height="14" fill="#fff" stroke="#777"/><rect x="1247" y="1001" width="14" height="3" fill="#b8c4d8"/><circle cx="1258" cy="1012" r="4.500" fill="#c82020"/><path d="M1256 1010l4 4M1260 1010l-4 4" stroke="#fff"/>
<path d="M1273 1009l3 6 7-14" fill="none" stroke="#2aa03a" stroke-width="2.500"/>
<path d="M1548 1015c0-7 3-11 7-12 3 1 6 5 6 12z" fill="#c9c6c7" stroke="#8a8a8a"/><rect x="1553" y="1008" width="5" height="5" fill="#666"/>
<use href="#dd" x="1570" y="1006" width="8" height="4"/>
<circle cx="1599" cy="1007" r="4" fill="#9cc4f0" stroke="#2a60b8" stroke-width="1.300"/><path d="M1602 1010l4 5" stroke="#2a60b8" stroke-width="2"/><path d="M1597 1007h4M1599 1005v4" stroke="#123a8a"/>
<use href="#dd" x="1652" y="1006" width="8" height="4"/>
</svg>
</body></html>
